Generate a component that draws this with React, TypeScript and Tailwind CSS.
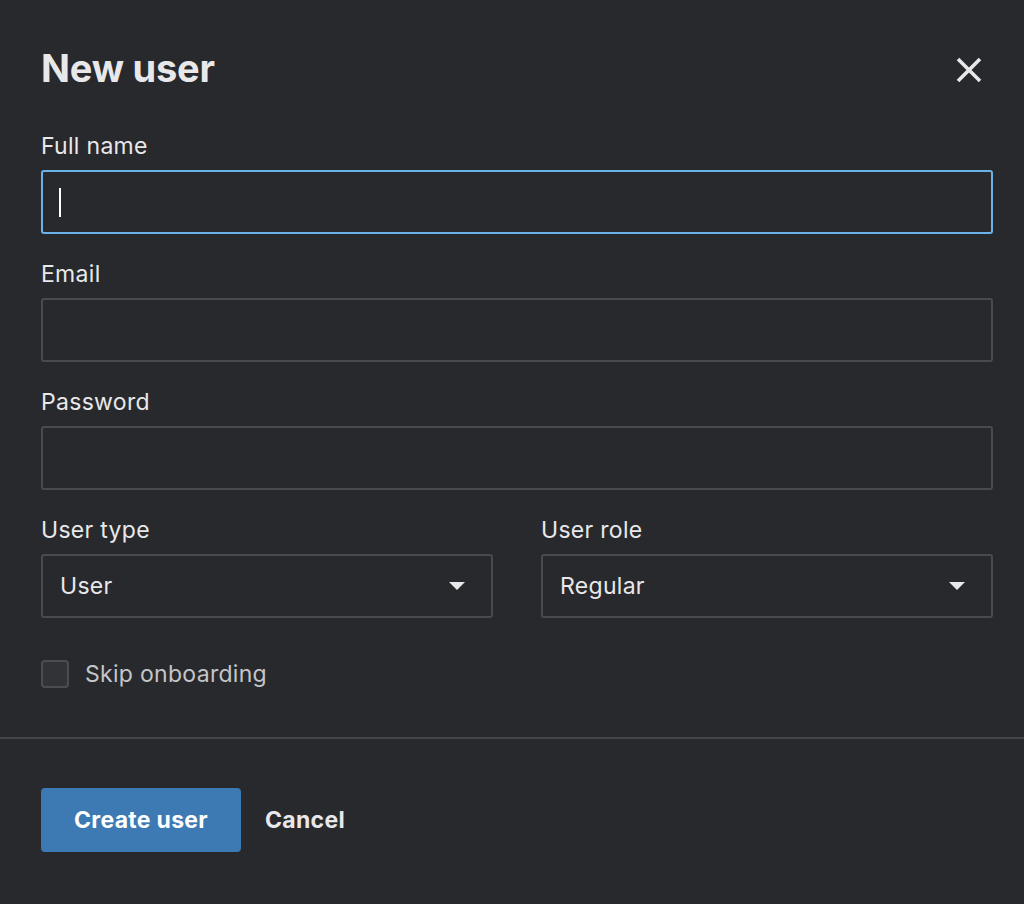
import React from 'react';

const fieldClass =
  'h-[64px] w-full rounded-[3px] border-2 border-[#494a4f] bg-[#28292d] px-[17px] text-[23px] tracking-[0.3px] text-[#e8e8ea] outline-none';

const Label: React.FC<{ children: React.ReactNode }> = ({ children }) => (
  <div className="mb-[10px] h-[28px] text-[23px] leading-[28px] tracking-[0.3px] text-[#e8e8ea]">{children}</div>
);

const Select: React.FC<{ value: string }> = ({ value }) => (
  <div className={`${fieldClass} flex items-center justify-between`}>
    <span>{value}</span>
    <svg width="16" height="8" viewBox="0 0 16 8" className="mr-[9px]">
      <path d="M0 0 L16 0 L8 8 Z" fill="#e8e8ea" />
    </svg>
  </div>
);

const App: React.FC = () => {
  return (
    <div
      className="flex h-[904px] w-[1024px] flex-col bg-[#28292d] text-[#e8e8ea]"
      style={{ fontFamily: 'Inter, "Noto Sans", sans-serif' }}
    >
      <div className="pl-[41px] pr-[31px] pt-[44px]">
        <div className="flex items-center justify-between">
          <h1 className="text-[38px] font-bold leading-[48px] tracking-[-0.2px]">New user</h1>
          <button aria-label="Close" className="mr-[10px] mt-[4px] flex h-[28px] w-[28px] items-center justify-center">
            <svg width="28" height="28" viewBox="0 0 28 28">
              <path d="M3 3 L25 25 M25 3 L3 25" stroke="#e8e8ea" strokeWidth="3.6" strokeLinecap="butt" />
            </svg>
          </button>
        </div>

        <div className="mt-[40px]">
          <Label>Full name</Label>
          <div className="flex h-[64px] w-full items-center rounded-[3px] border-2 border-[#6cb2ea] px-[16px]">
            <span className="h-[29px] w-[2px] bg-white" />
          </div>
        </div>

        <div className="mt-[26px]">
          <Label>Email</Label>
          <div className={fieldClass} />
        </div>

        <div className="mt-[26px]">
          <Label>Password</Label>
          <div className={fieldClass} />
        </div>

        <div className="mt-[26px] grid grid-cols-2 gap-[48px]">
          <div>
            <Label>User type</Label>
            <Select value="User" />
          </div>
          <div>
            <Label>User role</Label>
            <Select value="Regular" />
          </div>
        </div>

        <label className="mt-[42px] flex items-center gap-[16px]">
          <span className="h-[28px] w-[28px] rounded-[4px] border-2 border-[#4c4d52] bg-[#323337]" />
          <span className="text-[23px] leading-[28px] tracking-[0.3px] text-[#c4c5c9]">Skip onboarding</span>
        </label>
      </div>

      <div className="mt-[49px] h-[2px] w-full bg-[#45464b]" />

      <div className="flex items-center gap-[24px] px-[41px] pt-[49px]">
        <button className="h-[64px] w-[200px] rounded-[4px] bg-[#3d79b2] text-[23px] font-bold tracking-[0.3px] text-white">
          Create user
        </button>
        <button className="text-[23px] font-bold tracking-[0.3px] text-[#e8e8ea]">Cancel</button>
      </div>
    </div>
  );
};

export default App;
